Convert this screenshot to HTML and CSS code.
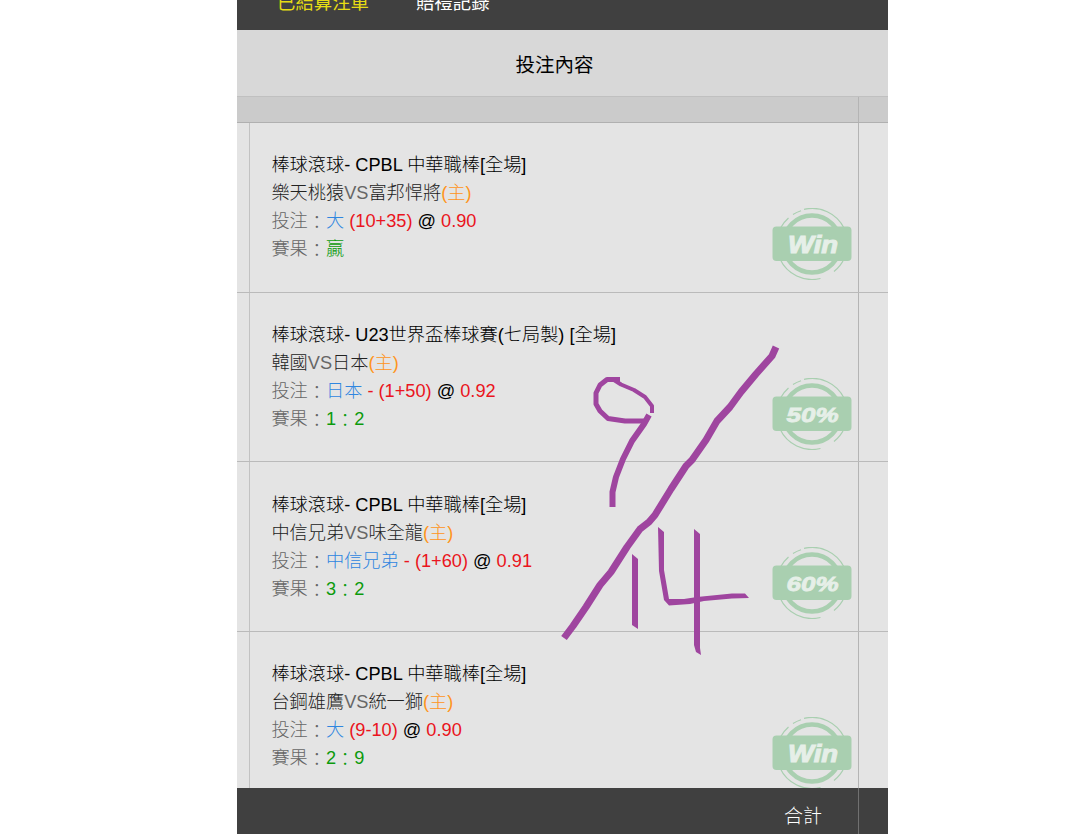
FILE: index.html
```html
<!DOCTYPE html>
<html lang="zh-Hant">

<head>
    <meta charset="UTF-8">
    <meta name="viewport" content="width=device-width, initial-scale=1.0">
    <title>已結算注單</title>
    <link rel="stylesheet" href="styles.css">
</head>

<body>
    <svg width="0" height="0" class="defs">
        <symbol id="stamp" viewBox="0 0 80 72">
            <g fill="none" stroke="#a9cfb0">
                <circle cx="40" cy="36" r="28.5" stroke-width="4.5" />
                <path d="M32 1.4A35.4 35.4 0 0 1 72 20M21 6.4A35 35 0 0 1 29 2.7M8.5 20A35.4 35.4 0 0 1 16.5 10M8 51A35.4 35.4 0 0 0 48.5 70.5M72 51A35.4 35.4 0 0 1 62 63.5" stroke-width="1.2" />
            </g>
            <rect x="0.5" y="18.5" width="79" height="34.5" rx="4" fill="#a9cfb0" />
        </symbol>
    </svg>

    <div class="panel">
        <div class="nav">
            <div class="nav-item active">已結算注單</div>
            <div class="nav-item">賠禮記錄</div>
        </div>
        <div class="title">投注內容</div>
        <div class="band">
            <div class="band-end"></div>
        </div>

        <div class="list">
            <div class="row">
                <div class="side"></div>
                <div class="bet">
                    <div class="info">
                        <div class="league">棒球滾球- CPBL 中華職棒[全場]</div>
                        <div>樂天桃猿<span class="vs">VS</span>富邦悍將<span class="home">(主)</span></div>
                        <div class="gray">投注<span class="colon">：</span><span class="pick">大</span> <span class="red">(10+35)</span> <span class="at">@</span> <span class="red">0.90</span></div>
                        <div class="gray">賽果<span class="colon">：</span><span class="green">贏</span></div>
                    </div>
                    <svg class="badge" width="80" height="72">
                        <use href="#stamp" />
                        <text class="win" x="41" y="44.5" textLength="50" lengthAdjust="spacingAndGlyphs">Win</text>
                    </svg>
                </div>
                <div class="end"></div>
            </div>

            <div class="row">
                <div class="side"></div>
                <div class="bet">
                    <div class="info">
                        <div class="league">棒球滾球- U23世界盃棒球賽(七局製) [全場]</div>
                        <div>韓國<span class="vs">VS</span>日本<span class="home">(主)</span></div>
                        <div class="gray">投注<span class="colon">：</span><span class="pick">日本</span> <span class="red">- (1+50)</span> <span class="at">@</span> <span class="red">0.92</span></div>
                        <div class="gray">賽果<span class="colon">：</span><span class="green">1<span class="colon">：</span>2</span></div>
                    </div>
                    <svg class="badge" width="80" height="72">
                        <use href="#stamp" />
                        <text class="rate" x="40.5" y="44" textLength="52" lengthAdjust="spacingAndGlyphs">50%</text>
                    </svg>
                </div>
                <div class="end"></div>
            </div>

            <div class="row">
                <div class="side"></div>
                <div class="bet">
                    <div class="info">
                        <div class="league">棒球滾球- CPBL 中華職棒[全場]</div>
                        <div>中信兄弟<span class="vs">VS</span>味全龍<span class="home">(主)</span></div>
                        <div class="gray">投注<span class="colon">：</span><span class="pick">中信兄弟</span> <span class="red">- (1+60)</span> <span class="at">@</span> <span class="red">0.91</span></div>
                        <div class="gray">賽果<span class="colon">：</span><span class="green">3<span class="colon">：</span>2</span></div>
                    </div>
                    <svg class="badge" width="80" height="72">
                        <use href="#stamp" />
                        <text class="rate" x="40.5" y="44" textLength="52" lengthAdjust="spacingAndGlyphs">60%</text>
                    </svg>
                </div>
                <div class="end"></div>
            </div>

            <div class="row">
                <div class="side"></div>
                <div class="bet">
                    <div class="info">
                        <div class="league">棒球滾球- CPBL 中華職棒[全場]</div>
                        <div>台鋼雄鷹<span class="vs">VS</span>統一獅<span class="home">(主)</span></div>
                        <div class="gray">投注<span class="colon">：</span><span class="pick">大</span> <span class="red">(9-10)</span> <span class="at">@</span> <span class="red">0.90</span></div>
                        <div class="gray">賽果<span class="colon">：</span><span class="green">2<span class="colon">：</span>9</span></div>
                    </div>
                    <svg class="badge" width="80" height="72">
                        <use href="#stamp" />
                        <text class="win" x="41" y="44.5" textLength="50" lengthAdjust="spacingAndGlyphs">Win</text>
                    </svg>
                </div>
                <div class="end"></div>
            </div>
        </div>

        <div class="total">
            <div class="total-label">合計</div>
            <div class="total-end"></div>
        </div>

        <!-- 手寫日期 -->
        <svg class="note" width="230" height="330" viewBox="555 335 230 330">
            <path class="stroke" d="M652 413V406L645 397L634 390L621 384.5L614 380" stroke-width="4" />
            <path class="stroke" d="M620 379.5H607L600 385L596 393V404L600 411L608 418.5L625 421H646" stroke-width="5" />
            <path class="stroke" d="M649 415L644 424L632 441L623 459L616 477L612.5 492V507" stroke-width="6" />
            <path class="stroke" d="M776 347L772 356L756 374L741 392L730 407L717 421L706 440L692 460L686 466L671 489L655 515L649 522L640 529L627 547L611 572L600 585L586 607L573 626L564 638" stroke-width="7" />
            <path d="M632 554L638 559V629L632 625Z" />
            <path d="M658 527L664 532V570L669 599L684 599L697 597L732 593.5H745L749 598L732 598.5L704 601L690 604L669 605.5L664 600L659 571Z" />
            <path d="M694 529L700 534V648L701 655L696 652L694 645Z" />
        </svg>
    </div>
</body>

</html>
```

FILE: styles.css
```css
body {
    margin: 0;
    height: 840px;
    background-color: #fff;
    font-family: "Liberation Sans", "Noto Sans CJK TC", sans-serif;
    font-size: 18.2px;
    overflow: hidden;
}

.defs {
    display: block;
    height: 0;
}

.panel {
    position: relative;
    width: 651px;
    height: 834px;
    margin-left: 237px;
    display: flex;
    flex-direction: column;
    background-color: #e4e4e4;
}

.nav {
    height: 30px;
    flex: none;
    display: flex;
    align-items: flex-end;
    gap: 47px;
    padding: 0 40px 15px;
    box-sizing: border-box;
    background-color: #404040;
    color: #fff;
    overflow: hidden;
    font-size: 18.4px;
    line-height: 24px;
}

.nav-item.active {
    color: #e6dc14;
}

.title {
    height: 66px;
    line-height: 70px;
    flex: none;
    text-align: center;
    font-size: 19.5px;
    padding-right: 16px;
    background-color: #d8d8d8;
    border-bottom: 1px solid #c0c0c0;
    color: #000;
}

.band {
    height: 25px;
    flex: none;
    display: flex;
    justify-content: flex-end;
    background-color: #cbcbcb;
    border-bottom: 1px solid #b0b0b0;
}

.band-end,
.end {
    width: 29px;
    border-left: 1px solid #b4b4b4;
}

.list {
    flex: 1;
    min-height: 0;
    overflow: hidden;
    color: #222;
}

.row {
    height: 169.6px;
    box-sizing: border-box;
    display: flex;
    border-bottom: 1px solid #bababa;
}

.side {
    width: 12px;
    border-right: 1px solid #c2c2c2;
}

.bet {
    flex: 1;
    display: flex;
    justify-content: space-between;
    align-items: flex-end;
    padding: 28.4px 6px 11.4px 21.4px;
}

.info {
    align-self: flex-start;
    line-height: 28px;
    font-weight: 300;
    white-space: nowrap;
}

.info > div {
    height: 28px;
}

.league,
.at {
    color: #000;
}

.gray,
.vs {
    color: #666;
}

.colon {
    position: relative;
    top: 2px;
}

.home {
    color: #ff9420;
}

.pick {
    color: #2f86e0;
}

.red {
    color: #ea1420;
}

.green {
    color: #0c9a0c;
}

.badge {
    flex: none;
}

.badge text {
    fill: #e6efe8;
    stroke: #e6efe8;
    text-anchor: middle;
    font-weight: bold;
    font-style: italic;
}

.win {
    font-size: 23px;
    stroke-width: 1px;
}

.rate {
    font-size: 21px;
    stroke-width: 0.8px;
}

.total {
    height: 46px;
    flex: none;
    display: flex;
    justify-content: flex-end;
    background-color: #404040;
    color: #fff;
}

.total-label {
    padding-right: 36px;
    font-size: 19px;
    font-weight: 300;
    line-height: 58px;
}

.total-end {
    width: 29px;
    border-left: 1px solid #707070;
}

.note {
    position: absolute;
    left: 318px;
    top: 335px;
    fill: #9f459f;
}

.stroke {
    fill: none;
    stroke: #9f459f;
    stroke-linejoin: round;
}
```
